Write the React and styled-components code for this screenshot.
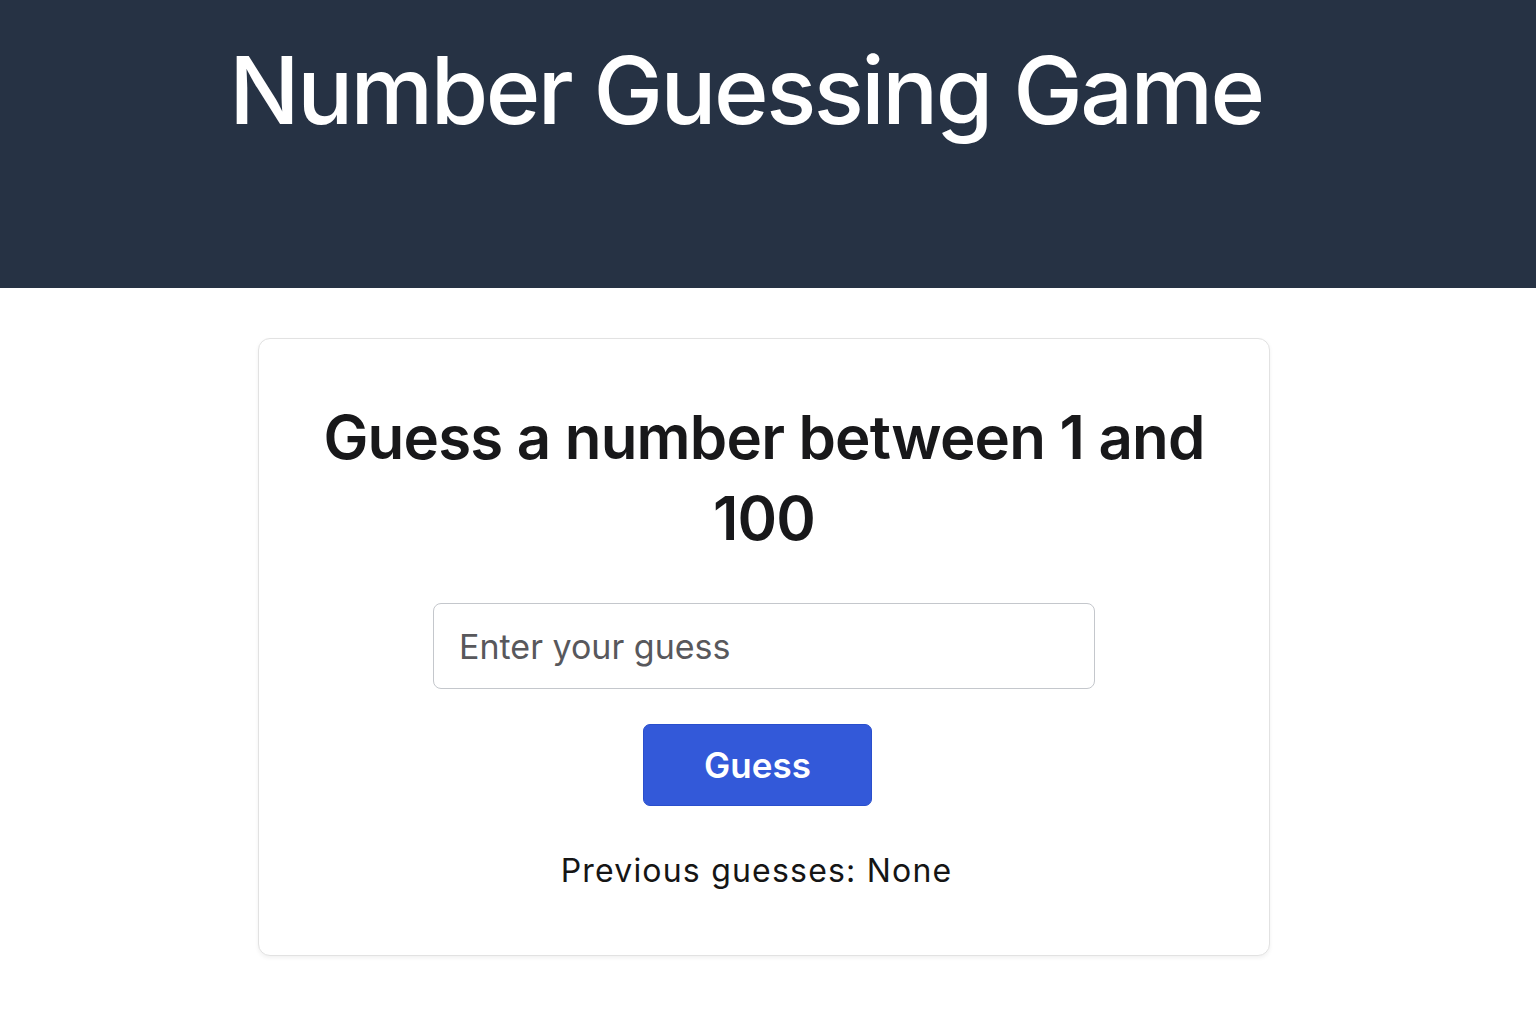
import React from "react";
import styled, { createGlobalStyle } from "styled-components";

const Global = createGlobalStyle`
  html, body { margin: 0; padding: 0; background: #ffffff; }
  body { font-family: Inter, "Noto Sans", "Liberation Sans", sans-serif; }
  * { box-sizing: border-box; }
`;

const Header = styled.header`
  background: #263244;
  height: 288px;
  padding: 44px 44px 0 0;
  display: flex;
  justify-content: center;
  align-items: flex-start;
`;

const Title = styled.h1`
  margin: 0;
  color: #ffffff;
  font-size: 93px;
  font-weight: 500;
  line-height: 1;
  letter-spacing: -2.5px;
`;

const Main = styled.main`
  padding: 50px 8px 60px 0;
`;

const Card = styled.section`
  width: 1012px;
  margin: 0 auto;
  background: #ffffff;
  border: 1px solid #e2e2e2;
  border-radius: 12px;
  box-shadow: 0 2px 4px rgba(0, 0, 0, 0.06);
  padding: 58px 60px 63px;
  display: flex;
  flex-direction: column;
  align-items: center;
`;

const Heading = styled.h2`
  margin: 0;
  color: #18181a;
  font-size: 60px;
  font-weight: 600;
  line-height: 81px;
  text-align: center;
  letter-spacing: -0.8px;
`;

const Input = styled.input`
  margin-top: 44px;
  width: 662px;
  height: 86px;
  border: 1px solid #c4c7cc;
  border-radius: 8px;
  padding: 0 25px;
  font-family: inherit;
  font-size: 34px;
  color: #222;
  outline: none;
  &::placeholder { color: #58585c; }
`;

const Button = styled.button`
  margin: 35px 13px 0 0;
  width: 229px;
  height: 82px;
  background: #3359d9;
  border: 1px solid #2a4fcc;
  border-radius: 7px;
  color: #ffffff;
  font-family: inherit;
  font-size: 35px;
  font-weight: 600;
  cursor: pointer;
`;

const History = styled.p`
  margin: 44px 15px 0 0;
  font-size: 32px;
  color: #151515;
  line-height: 1.3;
  letter-spacing: 1.2px;
`;

export default function App() {
  return (
    <>
      <Global />
      <Header>
        <Title>Number Guessing Game</Title>
      </Header>
      <Main>
        <Card>
          <Heading>Guess a number between 1 and 100</Heading>
          <Input type="number" placeholder="Enter your guess" />
          <Button>Guess</Button>
          <History>Previous guesses: None</History>
        </Card>
      </Main>
    </>
  );
}
